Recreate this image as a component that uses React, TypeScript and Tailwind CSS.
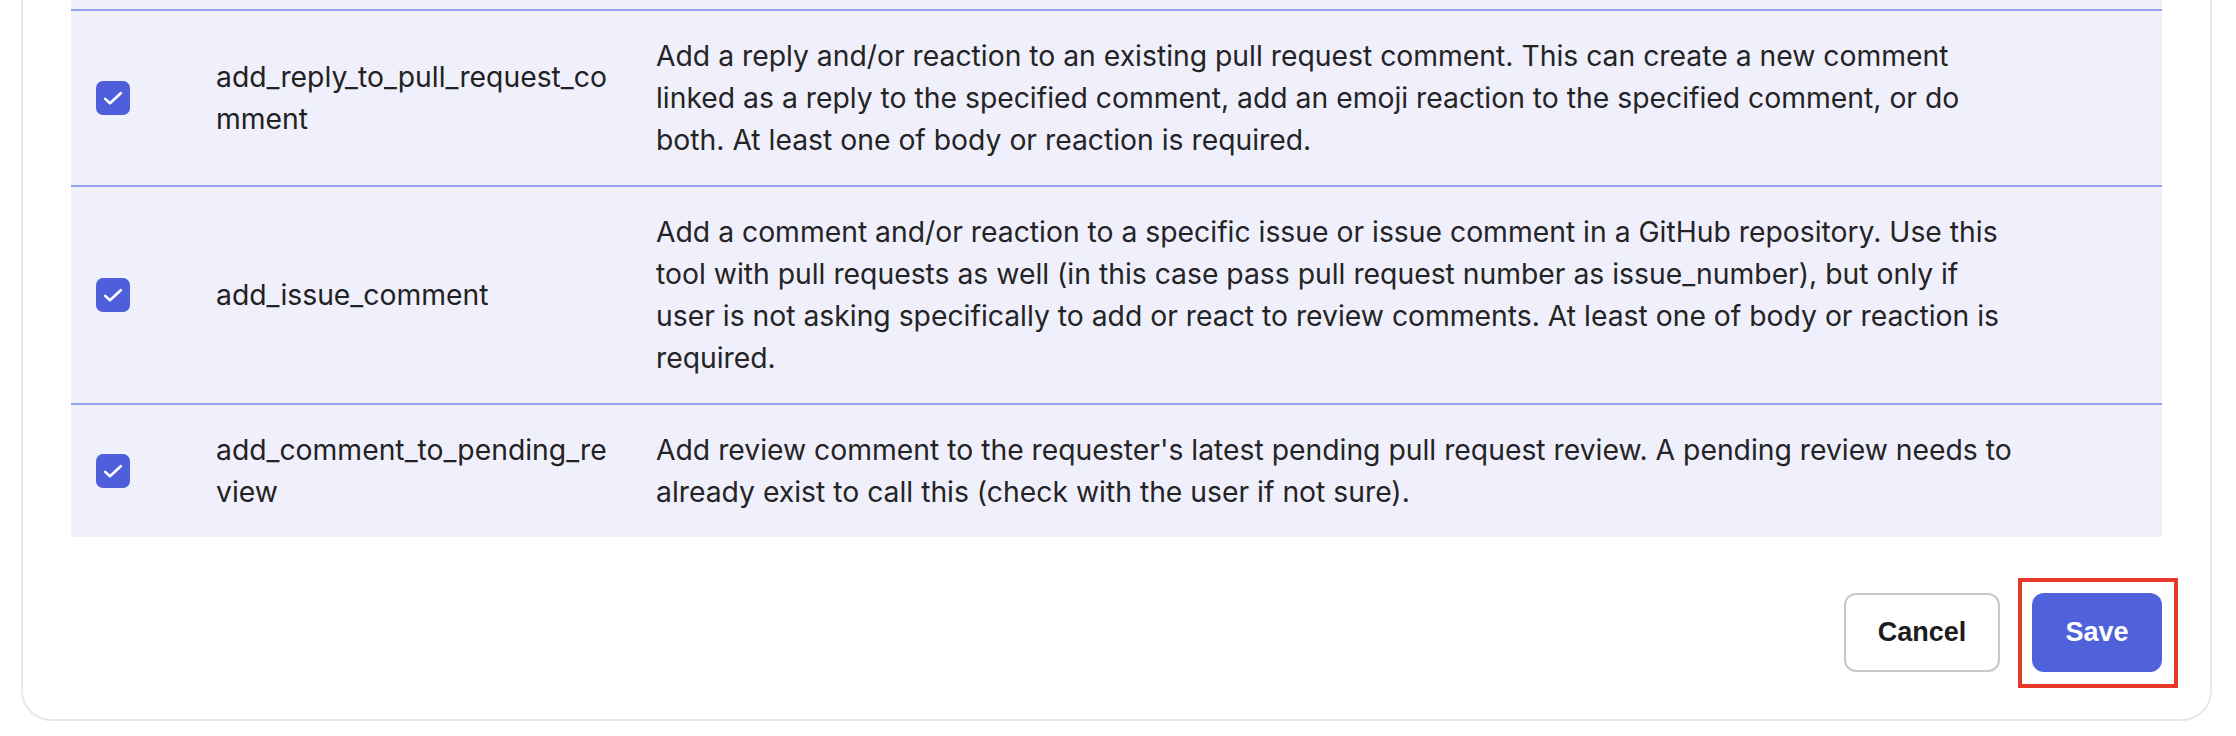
import React from "react";

type Tool = {
  name: string;
  description: string;
};

const tools: Tool[] = [
  {
    name: "add_reply_to_pull_request_comment",
    description:
      "Add a reply and/or reaction to an existing pull request comment. This can create a new comment linked as a reply to the specified comment, add an emoji reaction to the specified comment, or do both. At least one of body or reaction is required.",
  },
  {
    name: "add_issue_comment",
    description:
      "Add a comment and/or reaction to a specific issue or issue comment in a GitHub repository. Use this tool with pull requests as well (in this case pass pull request number as issue_number), but only if user is not asking specifically to add or react to review comments. At least one of body or reaction is required.",
  },
  {
    name: "add_comment_to_pending_review",
    description:
      "Add review comment to the requester's latest pending pull request review. A pending review needs to already exist to call this (check with the user if not sure).",
  },
];

function CheckBox() {
  return (
    <div className="w-[34px] h-[34px] rounded-[7px] bg-[#4f5fdb] flex items-center justify-center">
      <svg viewBox="0 0 24 24" className="w-[26px] h-[26px]" fill="none">
        <polyline
          points="4.8 12.8 9.2 16.8 19.2 7.6"
          stroke="white"
          strokeWidth="2.4"
          strokeLinecap="round"
          strokeLinejoin="round"
        />
      </svg>
    </div>
  );
}

export default function App() {
  return (
    <div className="min-h-screen bg-white pl-[21px] pr-[24px] h-[736px] overflow-hidden">
      <div className="border-2 border-t-0 border-[#e8e8e8] rounded-b-[30px] pl-[48px] pr-[48px] pb-[47px] bg-white">
        {/* tools table */}
        <div className="bg-[#f0f0fc] font-['Inter',sans-serif] text-[28.3px] leading-[42px] text-[#222222]">
          <div className="h-[9px]" />
          {tools.map((tool) => (
            <div
              key={tool.name}
              className="grid grid-cols-[145px_440px_1fr] items-center border-t-2 border-[#97a3eb] py-[24px]"
            >
              <div className="pl-[25px]">
                <CheckBox />
              </div>
              <div className="pr-[44px] break-all">{tool.name}</div>
              <div className="pr-[140px] text-[#242424]">{tool.description}</div>
            </div>
          ))}
        </div>

        {/* footer actions */}
        <div className="flex justify-end items-center gap-[32px] mt-[56px] font-['Liberation_Sans',Arial,sans-serif] text-[27px] font-bold">
          <button className="w-[156px] h-[79px] rounded-[12px] border-2 border-[#c9c9c9] bg-white text-[#1c1c1c]">
            Cancel
          </button>
          <div className="relative">
            <button className="w-[130px] h-[79px] rounded-[12px] bg-[#4f62dc] text-white">
              Save
            </button>
            <div className="absolute -left-[14px] -right-[16px] -top-[15px] -bottom-[16px] border-[4px] border-[#e53a2a] pointer-events-none" />
          </div>
        </div>
      </div>
    </div>
  );
}
